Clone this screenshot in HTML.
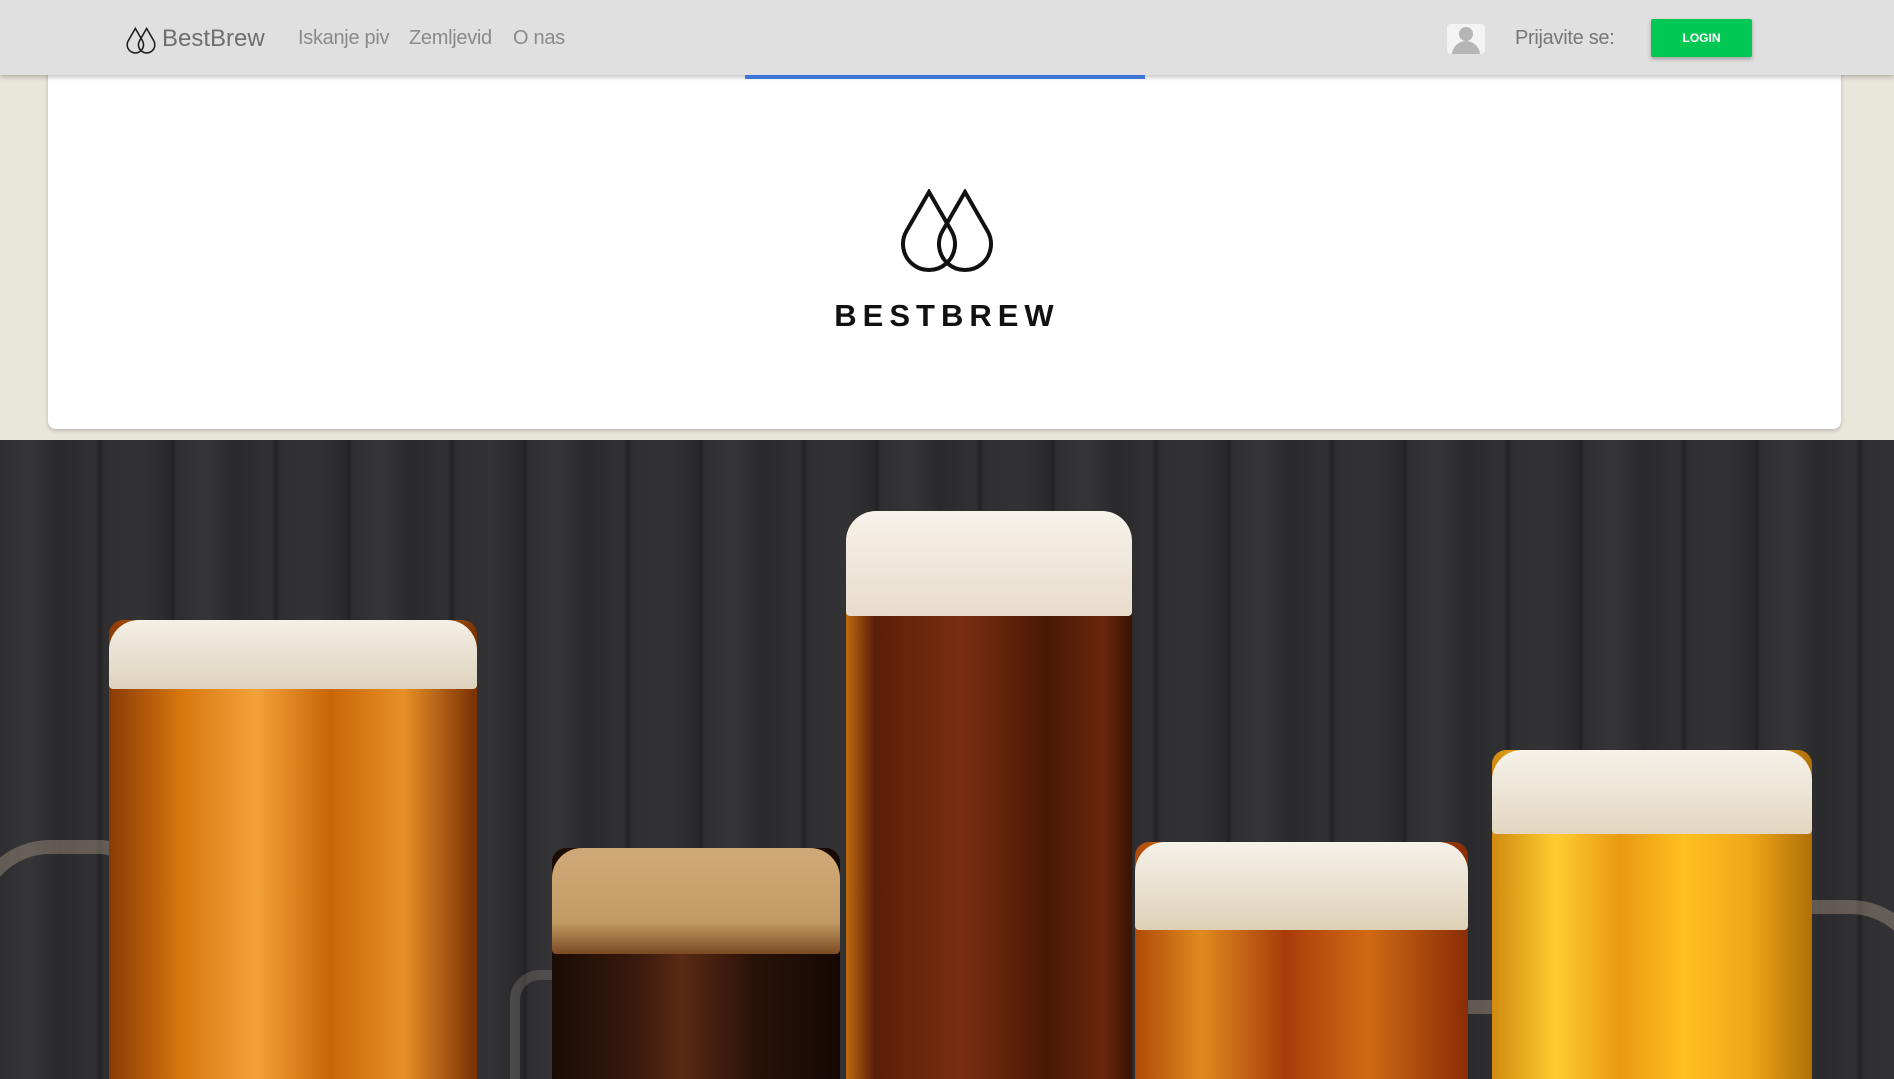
<!DOCTYPE html>
<html><head><meta charset="utf-8"><style>
*{margin:0;padding:0;box-sizing:border-box}
html,body{width:1894px;height:1079px;overflow:hidden;background:#e9e7d9;font-family:"Liberation Sans",sans-serif;position:relative}
.nav{position:absolute;left:0;top:0;width:1894px;height:75px;background:#e0e0e0;box-shadow:0 2px 5px rgba(0,0,0,.25);z-index:5}
.nav span{position:absolute;top:27px;font-size:20px;color:#8a8a8a;letter-spacing:-.3px}
.brand{position:absolute;left:162px;top:25px;font-size:24px;color:#6f6f6f}
.card{position:absolute;left:48px;top:60px;width:1793px;height:369px;background:#fff;border-radius:8px;box-shadow:0 2px 4px rgba(0,0,0,.2)}
.bar{position:absolute;left:745px;top:75px;width:400px;height:4px;background:#3c77d8;z-index:6}
.logo-t{position:absolute;left:0;width:1894px;top:298px;text-align:center;font-size:31px;font-weight:bold;letter-spacing:6px;color:#111}
.photo{position:absolute;left:0;top:440px;width:1894px;height:639px;overflow:hidden;
background:repeating-linear-gradient(90deg,#2e2e30 0,#353537 30px,#2a2a2c 60px,#313133 95px,#232325 100px,#2f2f31 104px,#333335 140px,#29292b 170px,#222224 173px,#2e2e30 176px);}
.g{position:absolute;border-radius:14px 14px 0 0}
.f{position:absolute;left:0;right:0;top:0;border-radius:30px 30px 4px 4px}
.btn{position:absolute;left:1651px;top:19px;width:101px;height:38px;background:#00c853;color:#fff;font-weight:bold;font-size:12px;text-align:center;line-height:38px;border-radius:2px;box-shadow:0 2px 4px rgba(0,0,0,.3)}
</style></head><body>
<div class="nav">
<svg style="position:absolute;left:125px;top:27px" width="32" height="28" viewBox="0 0 102 86" fill="none" stroke="#222" stroke-width="5"><path d="M33 3 L10.5 42 A26 26 0 1 0 55.5 42 Z"/><path d="M69 3 L46.5 42 A26 26 0 1 0 91.5 42 Z"/></svg>
<div class="brand">BestBrew</div>
<span style="left:298px">Iskanje piv</span>
<span style="left:409px">Zemljevid</span>
<span style="left:513px">O nas</span>
<div style="position:absolute;left:1447px;top:24px;width:38px;height:30px;background:#f3f3f3;border-radius:4px;overflow:hidden">
<div style="position:absolute;left:12px;top:3px;width:14px;height:14px;border-radius:50%;background:#b5b5b5"></div>
<div style="position:absolute;left:5px;top:17px;width:28px;height:20px;border-radius:14px 14px 0 0;background:#b5b5b5"></div></div>
<span style="left:1515px;top:27px;font-size:20px;color:#777">Prijavite se:</span>
<div class="btn">LOGIN</div>
</div>
<div class="bar"></div>
<div class="card"></div>
<svg style="position:absolute;left:896px;top:189px" width="102" height="86" viewBox="0 0 102 86" fill="none" stroke="#111" stroke-width="4"><path d="M33 3 L10.5 42 A26 26 0 1 0 55.5 42 Z"/><path d="M69 3 L46.5 42 A26 26 0 1 0 91.5 42 Z"/></svg>
<div class="logo-t">BESTBREW</div>
<div class="photo">
<div style="position:absolute;left:-30px;top:400px;width:170px;height:280px;border:14px solid rgba(220,200,170,.3);border-radius:80px 40px 0 0"></div>
<div class="g" style="left:109px;top:180px;width:368px;height:470px;background:linear-gradient(90deg,#8a3a05,#d8780f 20%,#f3a23a 40%,#c96508 60%,#e89028 80%,#7a3004)">
<div class="f" style="height:69px;background:linear-gradient(#f4f0e6,#ddd2bc)"></div></div>
<div style="position:absolute;left:510px;top:530px;width:60px;height:200px;border:10px solid rgba(200,190,170,.2);border-radius:30px 0 0 0"></div>
<div class="g" style="left:552px;top:408px;width:288px;height:300px;background:linear-gradient(90deg,#1a0b05,#3a1a0c 30%,#5a2a14 45%,#2a1208 70%,#150804)">
<div class="f" style="height:106px;background:linear-gradient(#cfa978,#c39a64 70%,#7a4a22)"></div></div>
<div class="g" style="left:846px;top:71px;width:286px;height:600px;border-radius:30px 30px 0 0;background:linear-gradient(90deg,#c06a10,#5a1e08 10%,#7a2e10 40%,#4a1806 70%,#6a260c 90%,#3a1204)">
<div class="f" style="height:105px;background:linear-gradient(#f6f2ea,#e8dccb)"></div></div>
<div style="position:absolute;left:1440px;top:560px;width:140px;height:200px;border:14px solid rgba(220,200,170,.3);border-radius:0 70px 0 0"></div>
<div class="g" style="left:1135px;top:402px;width:333px;height:300px;background:linear-gradient(90deg,#b04a08,#e08a20 20%,#a83c0a 45%,#d06a14 70%,#8a2c06)">
<div class="f" style="height:88px;background:linear-gradient(#f6f2ea,#ddd0b6)"></div></div>
<div style="position:absolute;left:1780px;top:460px;width:150px;height:250px;border:14px solid rgba(220,200,170,.3);border-radius:0 80px 0 0"></div>
<div class="g" style="left:1492px;top:310px;width:320px;height:400px;background:linear-gradient(90deg,#d08a10,#ffcc30 20%,#e89a10 40%,#ffc020 60%,#f0a818 80%,#b07008)">
<div class="f" style="height:84px;background:linear-gradient(#f6f2ea,#e2d6bf)"></div></div>
</div>
</body></html>
